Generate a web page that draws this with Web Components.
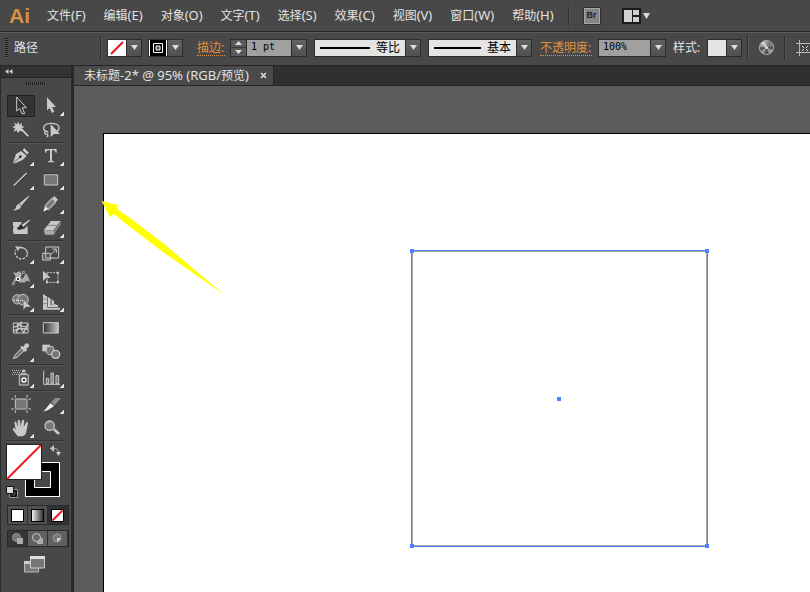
<!DOCTYPE html>
<html lang="zh-CN">
<head>
<meta charset="utf-8">
<title>未标题-2</title>
<style>
html, body { margin: 0; height: 100%; background: #5c5c5c; }
body { font: 12px/16px "Noto Sans", "Noto Sans CJK SC", sans-serif; color: #e2e2e2; }
</style>
</head>
<body>
<ai-app></ai-app>
<script>
const reset = `
*, *::before, *::after { box-sizing: border-box; }
button, input, select { font: inherit; color: inherit; margin: 0; padding: 0; border: 0; border-radius: 0; background: none; appearance: none; outline-offset: -1px; }
svg { display: block; }
.latin { font-size: 13px; }
`;
function define(name, html, setup) {
  const tpl = document.createElement('template');
  tpl.innerHTML = html;
  customElements.define(name, class extends HTMLElement {
    constructor() {
      super();
      this.attachShadow({ mode: 'open' }).append(tpl.content.cloneNode(true));
    }
    connectedCallback() { if (setup && !this.ready) { this.ready = true; setup(this, this.shadowRoot); } }
  });
}

/* Small drop-down arrow button */
define('ai-arrow', `<style>${reset}
:host { display: block; width: 16px; height: 18px; flex: none; }
button { display: grid; place-items: center; width: 100%; height: 100%; background: linear-gradient(#626262, #505050); border: 1px solid #2c2c2c; }
</style><button aria-label="展开"><svg width="7" height="5"><path d="M0 0H7L3.500 5Z" fill="#dcdcdc"/></svg></button>`);

/* Colour swatch with drop-down arrow; the slot holds its drawing */
define('ai-swatch', `<style>${reset}
:host { display: flex; flex: none; }
.s { width: 19px; height: 18px; border: 1px solid #2c2c2c; border-right: 0; background: #fff; }
</style><button class="s"><slot></slot></button><ai-arrow></ai-arrow>`, (h, r) => {
  r.querySelector('.s').setAttribute('aria-label', h.getAttribute('label'));
});

/* Text field with optional stepper */
define('ai-field', `<style>${reset}
:host { display: flex; flex: none; height: 18px; }
.step { display: none; width: 16px; flex-direction: column; border: 1px solid #2c2c2c; border-right: 0; }
:host([stepper]) .step { display: flex; }
.step button { flex: 1; display: grid; place-items: center; background: #5a5a5a; }
.step button + button { border-top: 1px solid #3a3a3a; }
input { width: var(--w, 52px); padding: 0 4px 1px; background: #a0a0a0; color: #000; border: 1px solid #2c2c2c; border-right: 0; font: 10px/16px "DejaVu Sans Mono", monospace; }
</style><span class="step"><button aria-label="增加"><svg width="7" height="4"><path d="M0 4H7L3.500 0Z" fill="#dcdcdc"/></svg></button><button aria-label="减少"><svg width="7" height="4"><path d="M0 0H7L3.500 4Z" fill="#dcdcdc"/></svg></button></span><input><ai-arrow></ai-arrow>`, (h, r) => {
  const i = r.querySelector('input');
  i.value = h.getAttribute('value');
  i.setAttribute('aria-label', h.getAttribute('label'));
});

/* Drop-down whose value shows a stroke sample */
define('ai-profile', `<style>${reset}
:host { display: block; flex: none; position: relative; height: 18px; }
select { width: var(--w, 106px); height: 18px; padding: 0 20px 0 0; text-align: right; text-align-last: right; background: #e4e4e2; color: #000; border: 1px solid #2c2c2c; line-height: 16px; }
.line { position: absolute; left: 6px; right: 51px; top: 8px; height: 2px; background: #000; pointer-events: none; }
ai-arrow { position: absolute; right: 0; top: 0; pointer-events: none; }
</style><select><option></option></select><span class="line"></span><ai-arrow></ai-arrow>`, (h, r) => {
  r.querySelector('option').textContent = h.getAttribute('value');
  r.querySelector('select').setAttribute('aria-label', h.getAttribute('label'));
});

define('ai-menu', `<style>${reset}
:host { display: flex; align-items: center; height: 31px; padding-left: 9px; background: #484848; overflow: hidden; white-space: nowrap; }
.logo { width: 38px; flex: none; font: bold 21px/28px "Liberation Sans Narrow", "Liberation Sans", sans-serif; color: #d9913f; }
nav { display: flex; gap: 18px; }
nav button { flex: none; }
.sep { width: 2px; height: 20px; flex: none; margin: 0 14px; border-left: 1px solid #2f2f2f; border-right: 1px solid #555; }
.br { width: 16px; height: 16px; background: #858585; border: 1px solid #a6a6a6; outline: 1px solid #303030; outline-offset: 0; color: #222; font: bold 9px/13px "Liberation Sans", sans-serif; }
.lay { display: flex; align-items: center; gap: 2px; margin-left: 22px; }
</style>
<span class="logo">Ai</span><nav></nav><span class="sep"></span><button class="br">Br</button>
<button class="lay" aria-label="排列文档"><svg width="19" height="16"><path fill="#1c1c1c" d="M0 0H19V16H0Z"/><path fill="#d0d0d0" d="M2 2H10V14H2ZM11 2H17V7H11ZM11 9H17V14H11Z"/></svg><svg width="7" height="6"><path d="M0 0H7L3.500 6Z" fill="#dcdcdc"/></svg></button>`, (h, r) => {
  const nav = r.querySelector('nav');
  for (const t of ['文件(F)', '编辑(E)', '对象(O)', '文字(T)', '选择(S)', '效果(C)', '视图(V)', '窗口(W)', '帮助(H)']) {
    const b = document.createElement('button');
    b.innerHTML = `${t.slice(0, 2)}<span class="latin">${t.slice(2)}</span>`;
    nav.append(b);
  }
});

define('ai-control', `<style>${reset}
:host { display: flex; align-items: center; height: 35px; padding: 0 0 2px 5px; background: #484848; border-top: 1px solid #262626; border-bottom: 1px solid #262626; box-shadow: inset 0 1px #5c5c5c; overflow: hidden; white-space: nowrap; }
.grip { width: 3px; height: 20px; flex: none; background: repeating-linear-gradient(#1c1c1c 0 1px, #555 1px 2px); }
.kind { width: 86px; flex: none; margin-left: 6px; }
.sep { width: 2px; height: 25px; flex: none; border-left: 1px solid #2f2f2f; border-right: 1px solid #555; }
a { color: #e0903f; text-decoration: none; border-bottom: 1px dotted #e0903f; line-height: 15px; flex: none; }
.g5 { margin-left: 5px; } .g6 { margin-left: 6px; } .g7 { margin-left: 7px; } .g8 { margin-left: 8px; } .g10 { margin-left: 10px; } .g14 { margin-left: 14px; }
.lab { width: 52px; } .lab1 { width: 28px; flex: none; }
button { flex: none; }
</style>
<span class="grip"></span><span class="kind">路径</span><span class="sep"></span>
<ai-swatch class="g5" label="填色"><svg width="18" height="16"><path d="M3 14L15 2" stroke="#e8141c" stroke-width="2"/></svg></ai-swatch>
<ai-swatch class="g6" label="描边颜色"><svg width="18" height="16"><path d="M1 0H17V16H1Z"/><path d="M4.500 3.500H13.500V12.500H4.500Z" fill="none" stroke="#fff"/><path d="M7 6H11V10H7Z" fill="#555" stroke="#fff"/></svg></ai-swatch>
<a class="g14 lab1" href="#stroke">描边:</a>
<ai-field class="g5" stepper label="描边粗细" value="1 pt" style="--w:45px"></ai-field>
<ai-profile class="g7" label="变量宽度配置文件" value="等比" style="--w:107px"></ai-profile>
<ai-profile class="g7" label="画笔定义" value="基本" style="--w:104px"></ai-profile>
<a class="g8 lab" href="#opacity">不透明度:</a>
<ai-field class="g6" label="不透明度" value="100%"></ai-field>
<span class="g7 lab1">样式:</span>
<ai-swatch class="g6" label="图形样式"><svg width="18" height="16"><path fill="#e4e4e2" d="M0 0H18V16H0Z"/></svg></ai-swatch>
<span class="sep g5"></span>
<button class="g10" aria-label="重新着色图稿"><svg width="15" height="15"><circle cx="7.500" cy="7.500" r="7" fill="#999" stroke="#b4b4b4"/><path fill="#555" d="M7.500 7.500L13.500 5A6.500 6.500 0 0 1 13.500 10ZM7.500 7.500L10 13.500A6.500 6.500 0 0 1 5 13.500ZM7.500 7.500L2 11A6.500 6.500 0 0 1 1 7Z"/><path fill="#ccc" d="M7.500 7.500L2 4A6.500 6.500 0 0 1 6 1Z"/><path fill="#777" d="M7.500 7.500L9 1A6.500 6.500 0 0 1 13 4Z"/><circle cx="7.500" cy="7.500" r="1.500" fill="#ddd"/></svg></button>
<span class="sep g10"></span>
<button class="g10" aria-label="对齐"><svg width="18" height="16" fill="none" stroke="#b8b8b8"><path d="M3.500 0V16M0 3.500H18M0 12.500H18M14.500 0V16"/><path d="M6 6L8 8M12 6L10 8M6 11L8 9M12 11L10 9" stroke="#ddd"/></svg></button>`);

/* One tool; its drawing comes from the icon table */
const L = '#c9c9c9', M = '#8d8d8d', D = '#2a2a2a';
const icons = {
  '选择工具': ['21 90', `<path d="M50 99V141L59 133L66 149H74L67 131H79Z" fill="#333" stroke="${L}" stroke-width="3"/>`],
  '直接选择工具': ['111 90', `<path d="M141 100V139L149 132L156 147L163 143L156 129H168Z" fill="${L}"/>`, 1],
  '魔棒工具': ['21 162', `<path d="M66 196L86 219" stroke="${D}" stroke-width="9"/><path d="M64 195L85 217" stroke="${L}" stroke-width="6"/><path d="M54 172L58 182L66 176L65 186L74 189L65 193L68 203L59 200L54 208L50 199L41 203L45 193L36 189L46 185L42 176L51 181Z" fill="${L}"/>`],
  '套索工具': ['111 162', `<path d="M145 204C123 201 128 179 151 178C184 177 179 197 170 203M140 200C130 202 134 214 142 210Q146 216 140 219" fill="none" stroke="${L}" stroke-width="4"/><path d="M152 180V219L162 210L180 210Z" fill="${L}"/>`],
  '钢笔工具': ['21 240', `<path d="M39 297L48 270L63 261L80 275L68 288L46 298Z" fill="${L}"/><path d="M66 258L73 251L88 266L81 273Z" fill="${L}" stroke="${D}" stroke-width="2"/><path d="M41 296L60 279" stroke="${D}" stroke-width="2"/><circle cx="61" cy="278" r="4" fill="${D}"/>`, 1],
  '文字工具': ['111 240', `<path d="M135 255H170V266H167Q166 259 160 259H156V289Q156 292 162 292V295H144V292Q150 292 150 289V259H145Q139 259 138 266H135Z" fill="${L}"/>`, 1],
  '直线段工具': ['21 312', `<path d="M43 368L82 330" stroke="${D}" stroke-width="3"/><path d="M41 365L80 327" stroke="${L}" stroke-width="4"/>`, 1],
  '矩形工具': ['111 312', `<path d="M133 332H173V363H133Z" fill="#777" stroke="${L}" stroke-width="3"/><path d="M132 329H174" stroke="${D}" stroke-width="2"/>`, 1],
  '画笔工具': ['21 6', `<path d="M88 19L64 47L57 41L85 18Z" fill="${L}"/><path d="M56 41L64 49Q62 62 36 63Q47 58 48 49Q51 42 56 41Z" fill="${L}" stroke="${D}" stroke-width="1"/>`],
  '铅笔工具': ['111 6', `<path d="M130 65L135 48L145 58Z" fill="#eee"/><path d="M135 47L155 25L168 37L146 59Z" fill="${M}" stroke="${L}" stroke-width="3"/><path d="M156 25L163 18L174 29L167 37Z" fill="${L}"/><path d="M141 52L160 31" stroke="#555" stroke-width="3"/>`, 1],
  '斑点画笔工具': ['21 78', `<path d="M39 96H66L58 110Q45 111 56 119L73 117L83 107V132H42Q36 121 41 111Q37 104 39 96Z" fill="${L}"/><path d="M93 90L70 112L63 104L88 88Z" fill="${L}" stroke="${D}" stroke-width="2"/><path d="M63 104L70 113Q63 121 50 117Q58 114 58 107Z" fill="${D}"/>`],
  '橡皮擦工具': ['111 78', `<path d="M131 121L153 93H180L160 121Z" fill="${L}"/><path d="M131 121H160V134H135Z" fill="#aaa"/><path d="M160 121L180 93V104L160 133Z" fill="#666" stroke="${L}" stroke-width="2"/><path d="M143 106H170" stroke="#666" stroke-width="2"/>`, 1],
  '旋转工具': ['21 156', `<path d="M51 177A19 19 0 0 1 82 193" fill="none" stroke="${L}" stroke-width="4"/><path d="M82 195A19 19 0 1 1 47 180" fill="none" stroke="${L}" stroke-width="4" stroke-dasharray="7 4"/><path d="M45 169L60 170L54 184Z" fill="${L}"/>`, 1],
  '比例缩放工具': ['111 156', `<path d="M128 190H151V210H128Z" fill="#555" stroke="${L}" stroke-width="3"/><path d="M137 171H176V204H137Z" fill="none" stroke="${L}" stroke-width="3"/><path d="M153 194L168 178M157 177H169V189" fill="none" stroke="${L}" stroke-width="3"/>`, 1],
  '宽度工具': ['21 228', `<path d="M41 243Q45 252 52 247Q61 240 63 250Q63 262 65 268Q71 264 74 256Q77 245 82 255Q88 264 90 277Q84 270 79 273Q74 280 67 277Q58 280 55 273Q48 269 37 279Q45 267 47 258Q39 251 41 243Z" fill="#aaa"/><path d="M40 281L71 247" stroke="${L}" stroke-width="2"/><circle cx="54" cy="267" r="5" fill="#333" stroke="#fff" stroke-width="3"/><path d="M37 278H43V284H37ZM67 244H73V250H67Z" fill="#444" stroke="${L}" stroke-width="2"/>`, 1],
  '自由变换工具': ['111 228', `<path d="M141 248H174V277H141Z" fill="none" stroke="${L}" stroke-width="3" stroke-dasharray="6 3"/><path d="M138 273H144V280H138ZM171 273H177V280H171ZM171 245H177V251H171Z" fill="${L}"/><path d="M129 242V273L138 264H152Z" fill="${L}"/>`],
  '形状生成器工具': ['21 300', `<circle cx="52" cy="328" r="14" fill="#777" stroke="${L}" stroke-width="3"/><circle cx="69" cy="329" r="16" fill="#777" stroke="${L}" stroke-width="3"/><path d="M42 331H72" stroke="#fff" stroke-width="3" stroke-dasharray="3 3"/><path d="M70 329V359L78 351H93Z" fill="${L}" stroke="#555" stroke-width="1"/>`, 1],
  '透视网格工具': ['111 300', `<path d="M129 312L142 320V353H180V359H129ZM144 321L152 326V345H174V351H144ZM155 328L162 333V342H168V344H155Z" fill="${L}"/><path d="M129 326L142 330M129 341H142" stroke="#666" stroke-width="2"/>`, 1],
  '网格工具': ['21 6', `<path d="M40 27H84V57H40Z" fill="#444" stroke="${L}" stroke-width="3"/><path d="M40 38Q50 41 63 27Q59 46 74 57M41 51Q57 39 83 46M48 57Q57 43 52 27M70 57Q79 43 83 31M59 33Q71 41 84 36" fill="none" stroke="${L}" stroke-width="4"/>`],
  '渐变工具': ['111 6', `<defs><linearGradient id="g"><stop stop-color="#333"/><stop offset="1" stop-color="#c4c4c4"/></linearGradient></defs><path d="M130 26H175V57H130Z" fill="url(#g)" stroke="${L}" stroke-width="3"/>`],
  '吸管工具': ['21 78', `<path d="M40 134L44 124L67 100L75 108L51 130Z" fill="#777" stroke="${L}" stroke-width="3"/><path d="M64 96L70 98L76 89Q83 86 87 92Q89 98 80 103L80 111L74 113L61 100Z" fill="${L}"/>`, 1],
  '混合工具': ['111 78', `<path d="M127 92H150V112H127Z" fill="${L}"/><path d="M141 98H159L164 116L157 122H145L138 115Z" fill="#777" stroke="${L}" stroke-width="3"/><circle cx="167" cy="121" r="12" fill="#777" stroke="${L}" stroke-width="4"/>`],
  '符号喷枪工具': ['21 156', `<path d="M36 169H62M36 181H62" stroke="${L}" stroke-width="3" stroke-dasharray="3 3"/><path d="M39 175H62" stroke="${L}" stroke-width="3" stroke-dasharray="3 3"/><path d="M66 167H76V174H66ZM62 176H80V179H62Z" fill="${L}"/><path d="M58 182H85V213H58Z" fill="#555" stroke="${L}" stroke-width="3"/><circle cx="72" cy="198" r="6" fill="#333" stroke="#fff" stroke-width="4"/>`, 1],
  '柱形图工具': ['111 156', `<path d="M131 170V211H180" fill="none" stroke="${L}" stroke-width="3"/><path d="M139 193H146V209H139ZM153 177H160V209H153ZM168 185H176V209H168Z" fill="#777" stroke="${L}" stroke-width="3"/>`, 1],
  '画板工具': ['21 234', `<path d="M46 255H80V284H46Z" fill="#777"/><path d="M46 243V251M46 256V284M46 289V297M81 243V251M81 256V284M81 289V297M33 255H42M46 255H80M85 255H93M33 285H42M46 285H80M85 285H93" stroke="${L}" stroke-width="3"/>`],
  '切片工具': ['111 234', `<path d="M130 293L151 268L162 275L158 279Q145 290 130 293Z" fill="#eee"/><path d="M153 265L166 252H183L164 274Z" fill="${M}"/>`, 1],
  '抓手工具': ['21 306', `<path d="M46 343L43 325Q45 320 49 325L54 339L53 320Q56 315 60 320L62 337L66 319Q69 315 73 320L71 339L78 326Q82 322 84 327L80 349Q78 362 69 367H53L39 348Q37 342 41 341L49 348Z" fill="${L}"/>`, 1],
  '缩放工具': ['111 306', `<path d="M162 346L177 360" stroke="${L}" stroke-width="8"/><circle cx="149" cy="335" r="14" fill="#777" stroke="${L}" stroke-width="4"/><path d="M140 332Q143 325 151 325" fill="none" stroke="#aaa" stroke-width="2"/>`]
};
define('ai-tool', `<style>${reset}
:host { display: block; height: 24px; position: relative; padding: 1px 0; }
button { display: block; width: 28px; height: 22px; overflow: visible; }
:host([active]) button { background: #333; outline: 1px solid #222; outline-offset: -1px; }
svg { width: 28px; height: 24px; margin-top: -1px; }
.more { position: absolute; width: 4px; height: 4px; right: 1px; bottom: 2px; background: linear-gradient(135deg, transparent 50%, #e0e0e0 50%); display: none; }
:host([more]) .more { display: block; }
</style><button></button><span class="more"></span>`, (h, r) => {
  const name = h.getAttribute('name'), [o, art] = icons[name], b = r.querySelector('button');
  b.setAttribute('aria-label', name);
  b.innerHTML = `<svg viewBox="${o} 84 72">${art}</svg>`;
});

define('ai-tools', `<style>${reset}
:host { display: flex; flex-direction: column; width: 74px; background: #484848; border-left: 1px solid #2a2a2a; border-right: 3px solid #282828; box-shadow: inset -1px 0 #505050; }
header { height: 12px; flex: none; padding: 3px 4px; background: #333; border-bottom: 1px solid #232323; }
header button { display: block; }
.grip { width: 20px; height: 3px; flex: none; margin: 4px 0 9px 25px; background: repeating-linear-gradient(90deg, #181818 0 1px, #555 1px 2px); }
.group { display: grid; grid-template-columns: 28px 28px; column-gap: 2px; margin: 0 5px 1px; padding-left: 1px; border-bottom: 1px solid #333; box-shadow: 0 1px #555; }
.colors { position: relative; height: 58px; flex: none; }
.colors button { position: absolute; }
.fill { left: 5px; top: 2px; } .stroke { left: 24px; top: 20px; } .swap { left: 49px; top: 3px; } .def { left: 5px; top: 44px; }
.trio { display: grid; grid-template-columns: repeat(3, 20px); flex: none; width: 62px; margin: 5px 0 0 6px; border: 1px solid #292929; }
.trio button { height: 18px; display: grid; place-items: center; background: #505050; border-right: 1px solid #303030; }
.trio .on { background: #303030; }
.modes button { height: 15px; background: #606060; }
.modes .on { background: #363636; }
.screen { align-self: flex-start; margin: 9px 0 0 23px; }
</style>
<header><button aria-label="折叠面板"><svg width="8" height="5"><path d="M3.500 0V5L0 2.500ZM7.500 0V5L4 2.500Z" fill="#d0d0d0"/></svg></button></header>
<div class="grip"></div><div class="list"></div>
<div class="colors">
<button class="stroke" aria-label="描边"><svg width="35" height="35"><path fill="#fff" d="M0 0H35V35H0Z"/><path d="M1 1H34V34H1Z"/><path d="M9.500 9.500H25.500V25.500H9.500Z" fill="#484848" stroke="#fff"/></svg></button>
<button class="fill" aria-label="填色"><svg width="36" height="36"><path fill="#222" d="M0 0H36V36H0Z"/><path fill="#fff" d="M1 1H35V35H1Z"/><path d="M1 35L35 1" stroke="#f01820" stroke-width="2"/></svg></button>
<button class="swap" aria-label="互换填色和描边"><svg width="11" height="11"><path d="M3 3.500Q8.500 3 8.500 8" fill="none" stroke="#bbb"/><path d="M0 3.500L4 0V7ZM6 7H11L8.500 11Z" fill="#ccc"/></svg></button>
<button class="def" aria-label="默认填色和描边"><svg width="12" height="12"><path d="M4.500 4.500H10.500V10.500H4.500Z" fill="#484848" stroke="#111" stroke-width="2"/><path d="M3.500 3.500H11.500V11.500H3.500Z" fill="none" stroke="#999"/><path d="M.5 .5H7.500V7.500H.5Z" fill="#ddd" stroke="#111"/></svg></button>
</div>
<div class="trio"><button aria-label="颜色"><svg width="13" height="13"><path d="M0 0H13V13H0Z"/><path fill="#fff" d="M1 1H12V12H1Z"/></svg></button><button aria-label="渐变"><svg width="13" height="13"><defs><linearGradient id="k"><stop stop-color="#eee"/><stop offset="1" stop-color="#333"/></linearGradient></defs><path d="M0 0H13V13H0Z"/><path fill="url(#k)" d="M1 1H12V12H1Z"/></svg></button><button class="on" aria-label="无"><svg width="13" height="13"><path d="M0 0H13V13H0Z"/><path fill="#fff" d="M1 1H12V12H1Z"/><path d="M1.500 11.500L11.500 1.500" stroke="#f01820" stroke-width="2"/></svg></button></div>
<div class="trio modes"><button class="on" aria-label="正常绘图"><svg width="11" height="11"><circle cx="4.500" cy="4.500" r="4" fill="#777" stroke="#999"/><path d="M5 5H11V11H5Z" fill="#aaa"/></svg></button><button aria-label="背面绘图"><svg width="11" height="11"><path d="M5 5H11V11H5Z" fill="#aaa"/><circle cx="4.500" cy="4.500" r="4" fill="#666" stroke="#ccc"/></svg></button><button aria-label="内部绘图"><svg width="11" height="11"><circle cx="5" cy="5" r="4" fill="#777" stroke="#999"/><path d="M5 5H9L5 9Z" fill="#ddd"/></svg></button></div>
<button class="screen" aria-label="更改屏幕模式"><svg width="22" height="17"><path d="M.5 5.500H14.500V16H.5Z" fill="#777" stroke="#bbb"/><path fill="#ccc" d="M0 5H15V8H0Z"/><path d="M6.500 .5H20.500V12H6.500Z" fill="#777" stroke="#ccc"/><path fill="#ddd" d="M6 0H21V3H6Z"/></svg></button>`, (h, r) => {
  const names = Object.keys(icons), list = r.querySelector('.list');
  let at = 0;
  for (const n of [4, 8, 6, 4, 2, 4]) {
    const g = document.createElement('div');
    g.className = 'group';
    for (const name of names.slice(at, at += n)) {
      const t = document.createElement('ai-tool');
      t.setAttribute('name', name);
      if (icons[name][2]) t.setAttribute('more', '');
      if (name === '选择工具') t.setAttribute('active', '');
      g.append(t);
    }
    list.append(g);
  }
});

define('ai-document', `<style>${reset}
:host { display: flex; flex-direction: column; min-width: 0; background: #5c5c5c; }
.tabs { height: 20px; flex: none; display: flex; background: #303030; border-bottom: 1px solid #252525; }
.tab { display: flex; align-items: center; gap: 11px; padding: 0 6px 0 10px; background: #4a4a4a; border-right: 1px solid #252525; white-space: nowrap; }
.canvas { flex: 1; position: relative; display: flex; padding: 47px 0 0 29px; overflow: hidden; }
.board { flex: 1; background: #fff; border: solid #000; border-width: 1px 0 0 1px; }
.shape, .pointer { position: absolute; }
.shape { left: 335px; top: 162px; }
.pointer { left: 27px; top: 114px; }
</style>
<div class="tabs"><div class="tab"><button class="name">未标题<span class="latin">-2* @ 95% (RGB/</span>预览<span class="latin">)</span></button><button aria-label="关闭"><svg width="7" height="7"><path d="M1 1L6 6M6 1L1 6" stroke="#ddd" stroke-width="1.500"/></svg></button></div></div>
<div class="canvas"><div class="board"></div>
<svg class="shape" width="301" height="301"><path d="M3.500 3.500H297.500V297.500H3.500Z" fill="none" stroke="#aaa"/><path d="M2.500 2.500H298.500V298.500H2.500Z" fill="none" stroke="#4f80ff"/><path fill="#4f80ff" d="M1 1H5V5H1ZM296 1H300V5H296ZM1 296H5V300H1ZM296 296H300V300H296ZM148 149H152V153H148Z"/></svg>
<svg class="pointer" width="125" height="97"><path d="M.5 1L17 5L16 9L29 18L62 43L123.500 95L62 52L29 27L13 14L9 17Z" fill="#ff0"/></svg></div>`);

define('ai-app', `<style>${reset}
:host { display: grid; grid-template: auto auto 1fr / auto 1fr; min-height: 100vh; }
ai-menu, ai-control { grid-column: 1 / -1; min-width: 0; }
</style><ai-menu></ai-menu><ai-control></ai-control><ai-tools></ai-tools><ai-document></ai-document>`);
</script>
</body>
</html>
